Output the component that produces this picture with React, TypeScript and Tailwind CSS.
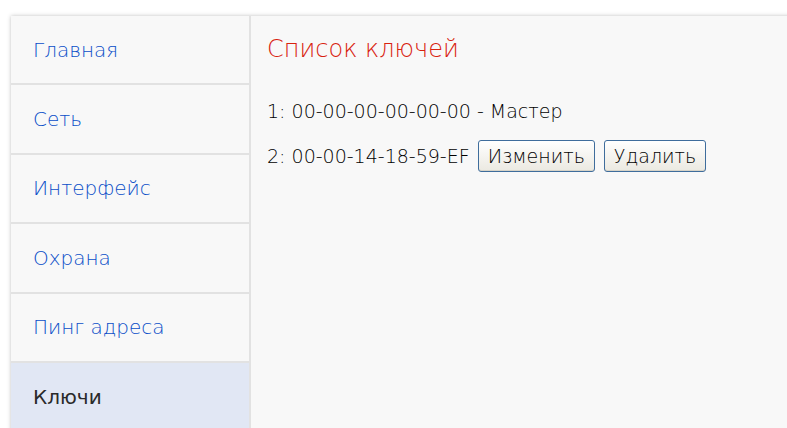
import React from "react"

const menu = [
    { title: "Главная" },
    { title: "Сеть" },
    { title: "Интерфейс" },
    { title: "Охрана" },
    { title: "Пинг адреса" },
    { title: "Ключи", active: true },
]

const keys = [
    { id: 1, mac: "00-00-00-00-00-00", master: true },
    { id: 2, mac: "00-00-14-18-59-EF", master: false },
]

const Boton = ({ children }: { children: React.ReactNode }) => (
    <button className="h-[32px] px-[9px] rounded-[3px] border border-[#3f6d9c] bg-gradient-to-b from-white to-[#ebe9e1] text-[19px] leading-none text-black shadow-[inset_0_-1px_0_#d6d3c8]">
        {children}
    </button>
)

export default function App() {
    return (
        <div className="h-[428px] w-[787px] overflow-hidden bg-white pt-[16px] pl-[11px] font-['DejaVu_Sans',Verdana,sans-serif] font-light">
            <div className="flex w-[900px] h-[500px] bg-[#f8f8f8] shadow-[0_0_4px_rgba(0,0,0,0.25)]">
                {/* menu lateral */}
                <div className="w-[240px] shrink-0 border-r-2 border-[#e2e2e2]">
                    {menu.map((item) => (
                        <div
                            key={item.title}
                            className={
                                item.active
                                    ? "h-[69.4px] flex items-center pl-[22px] border-b-2 border-[#e2e2e2] bg-[#e1e7f4] text-[20px] font-normal text-[#2a2a2a]"
                                    : "h-[69.4px] flex items-center pl-[22px] border-b-2 border-[#e2e2e2] text-[20px] text-[#0b4fc8]"
                            }
                        >
                            {item.title}
                        </div>
                    ))}
                </div>

                {/* contenido */}
                <div className="flex-1 pl-[16px] pt-[18px] text-black">
                    <h1 className="text-[24px] leading-[30px] text-[#d8220f]">Список ключей</h1>
                    <div className="mt-[35px] flex flex-col gap-[17px] text-[19px]">
                        {keys.map((k) => (
                            <div key={k.id} className="flex items-center gap-[8px] h-[24px] [&:not(:first-child)]:h-[32px]">
                                <span>
                                    {k.id}: {k.mac}
                                    {k.master && " - Мастер"}
                                </span>
                                {!k.master && (
                                    <div className="flex gap-[9px]">
                                        <Boton>Изменить</Boton>
                                        <Boton>Удалить</Boton>
                                    </div>
                                )}
                            </div>
                        ))}
                    </div>
                </div>
            </div>
        </div>
    )
}
